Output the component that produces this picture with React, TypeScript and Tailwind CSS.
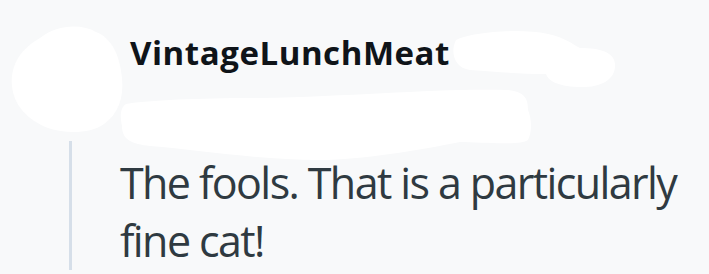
const Redactions = () => (
  <svg
    className="pointer-events-none absolute left-0 top-0"
    width="709"
    height="274"
    viewBox="0 0 709 274"
  >
    <g fill="#ffffff">
      {/* avatar */}
      <path d="M40 38 C58 24 82 24 96 32 C112 38 120 56 122 78 C124 98 118 114 104 124 C90 134 66 134 48 128 C28 120 14 106 12 86 C10 64 22 48 40 38 Z" />
      {/* handle next to the name */}
      <path d="M456 40 C470 32 520 28 548 34 C566 38 572 44 580 48 C600 48 614 52 615 64 C616 80 600 88 578 87 C556 86 548 80 546 74 C520 74 500 72 470 70 C454 68 450 52 456 40 Z" />
      {/* meta line under the name */}
      <path d="M126 104 C150 100 200 98 260 98 C360 96 440 88 508 90 C526 92 528 100 528 110 C532 120 532 132 528 140 C520 146 480 142 460 142 C420 150 360 160 320 160 C260 160 200 150 150 146 C132 144 122 140 122 126 C120 116 120 108 126 104 Z" />
    </g>
  </svg>
);

const App = () => {
  return (
    <div className="relative h-[274px] w-[709px] overflow-hidden bg-[#f8f9fa] font-['Open_Sans',sans-serif]">
      <div className="pl-[130px] pt-[36px]">
        <h2 className="text-[33px] font-bold leading-[33px] tracking-[0.55px] text-[#0f1419]">
          VintageLunchMeat
        </h2>
      </div>
      <div className="mt-[72px] flex">
        <div className="ml-[69px] w-[3px] self-stretch bg-[#d6dfe9]" />
        <p className="pl-[48px] pt-[13px] text-[43px] leading-[58px] tracking-[-1.6px] text-[#2f3a41]">
          The fools. That is a particularly
          <br />
          fine cat!
        </p>
      </div>
      <Redactions />
    </div>
  );
};

export default App;
